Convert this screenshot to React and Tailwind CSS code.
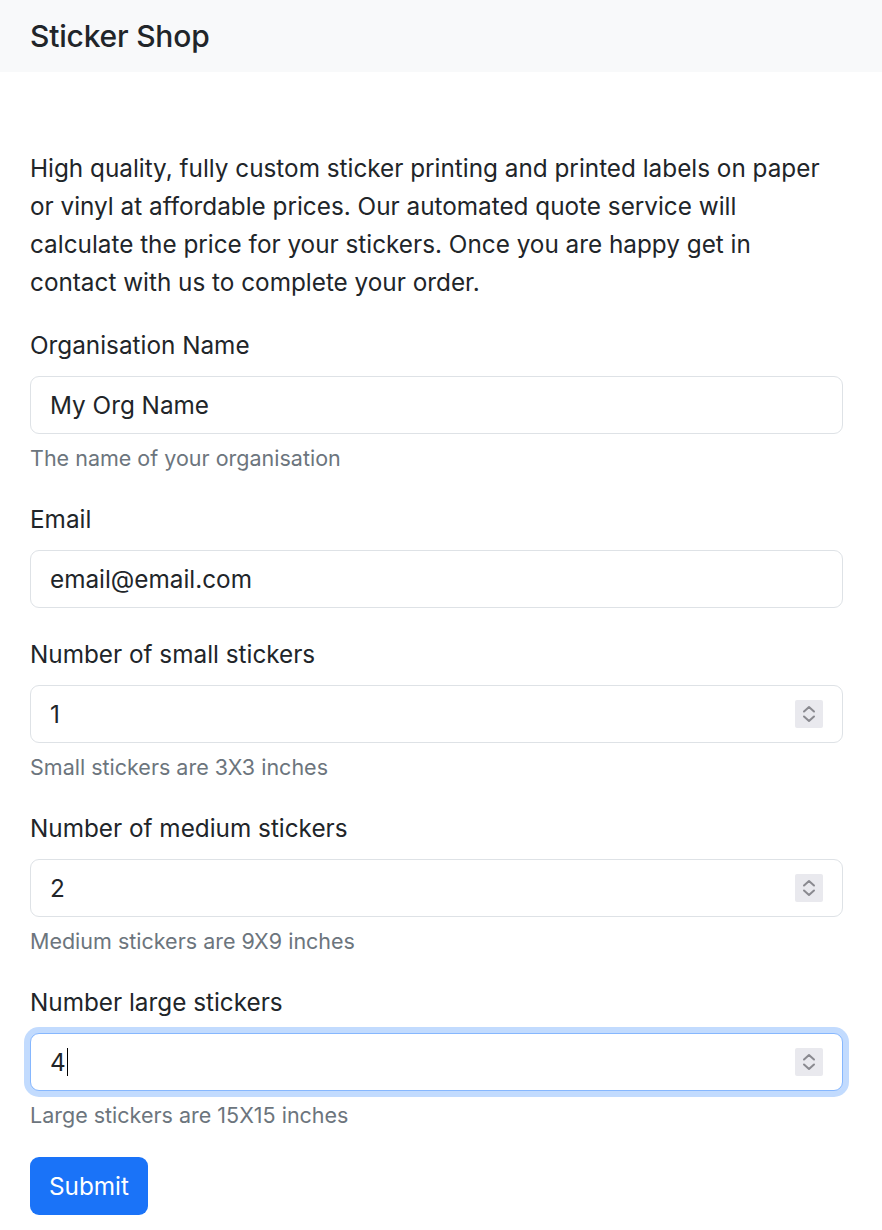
import React from "react";

function Spinner() {
  return (
    <span className="flex h-[28px] w-[28px] flex-col items-center justify-center bg-[#e9e9ee] rounded-[2px]">
      <svg width="14" height="20" viewBox="0 0 14 20" fill="none" stroke="#8a8a90" strokeWidth="2" strokeLinecap="round" strokeLinejoin="round">
        <path d="M2 7.5 L7 3 L12 7.5" />
        <path d="M2 12.5 L7 17 L12 12.5" />
      </svg>
    </span>
  );
}

function Field({ label, value, help, number, focused }) {
  return (
    <div className={help ? "mb-[25px]" : "mb-[27px]"}>
      <div className="mb-[12px] leading-[38px] text-[24.3px]">{label}</div>
      <div
        className={
          "flex h-[58px] items-center justify-between rounded-[9px] border bg-white pl-[19px] pr-[19px] " +
          (focused
            ? "border-[#86b7fe] shadow-[0_0_0_6px_rgba(13,110,253,0.25)]"
            : "border-[#dee2e6]")
        }
      >
        <span className="flex items-center text-[24.3px] leading-[38px]">
          {value}
          {focused && <span className="ml-[1px] inline-block h-[28px] w-[1px] bg-black" />}
        </span>
        {number && <Spinner />}
      </div>
      {help && (
        <div className="mt-[8px] text-[21.5px] leading-[33px] text-[#6c757d]">{help}</div>
      )}
    </div>
  );
}

export default function App() {
  return (
    <div
      className="min-h-[1230px] bg-white text-[#212529]"
      style={{ fontFamily: "Inter, 'Liberation Sans', sans-serif" }}
    >
      <header className="flex h-[72px] items-center bg-[#f8f9fa] px-[30px]">
        <span className="text-[30px] font-medium tracking-[-0.2px]">Sticker Shop</span>
      </header>
      <main className="ml-[30px] w-[813px] pt-[77px]">
        <p className="mb-[25px] text-[24.3px] leading-[38px]">
          High quality, fully custom sticker printing and printed labels on paper or vinyl at
          affordable prices. Our automated quote service will calculate the price for your
          stickers. Once you are happy get in contact with us to complete your order.
        </p>
        <Field label="Organisation Name" value="My Org Name" help="The name of your organisation" />
        <Field label="Email" value="email@email.com" />
        <Field label="Number of small stickers" value="1" help="Small stickers are 3X3 inches" number />
        <Field label="Number of medium stickers" value="2" help="Medium stickers are 9X9 inches" number />
        <Field label="Number large stickers" value="4" help="Large stickers are 15X15 inches" number focused />
        <button className="h-[58px] rounded-[9px] bg-[#1a73f8] px-[19px] text-[24.3px] text-white">
          Submit
        </button>
      </main>
    </div>
  );
}
